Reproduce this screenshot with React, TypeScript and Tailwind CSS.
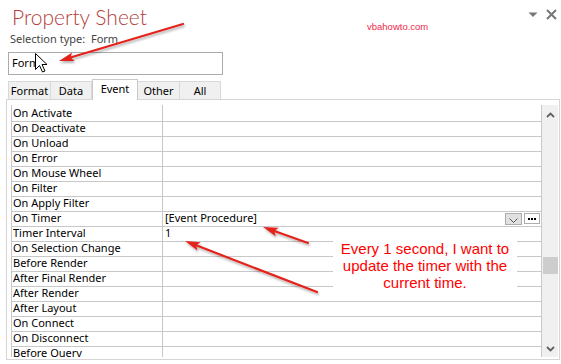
import React from "react";

const labels = [
  "On Activate",
  "On Deactivate",
  "On Unload",
  "On Error",
  "On Mouse Wheel",
  "On Filter",
  "On Apply Filter",
  "On Timer",
  "Timer Interval",
  "On Selection Change",
  "Before Render",
  "After Final Render",
  "After Render",
  "After Layout",
  "On Connect",
  "On Disconnect",
  "Before Query",
];

function Arrow({ x1, y1, x2, y2 }: { x1: number; y1: number; x2: number; y2: number }) {
  const dx = x2 - x1;
  const dy = y2 - y1;
  const L = Math.hypot(dx, dy);
  const ux = dx / L;
  const uy = dy / L;
  const hl = 15;
  const hw = 4.5;
  const bx = x2 - ux * hl;
  const by = y2 - uy * hl;
  const px = -uy;
  const py = ux;
  const nx = bx + ux * 3;
  const ny = by + uy * 3;
  const pts = `${x2},${y2} ${bx + px * hw},${by + py * hw} ${nx},${ny} ${bx - px * hw},${by - py * hw}`;
  return (
    <g>
      <line x1={x1} y1={y1} x2={nx} y2={ny} stroke="#e3241b" strokeWidth={2.2} strokeLinecap="round" />
      <polygon points={pts} fill="#e3241b" />
    </g>
  );
}

export default function App() {
  return (
    <div className="relative w-[561px] h-[364px] overflow-hidden bg-white font-['Noto_Sans',sans-serif] text-black">
      {/* header */}
      <div className="flex justify-between pt-[2px]">
        <div className="pl-[12px] font-['Lato',sans-serif] font-light text-[21px] leading-[30px] text-[#b4403b]">
          Property Sheet
        </div>
        <div className="flex items-start gap-[8px] pr-[4px] pt-[7px]">
          <svg width="10" height="12" viewBox="0 0 10 12">
            <polygon points="0.5,3.5 9.5,3.5 5,8" fill="#777" />
          </svg>
          <svg width="11" height="11" viewBox="0 0 11 11">
            <path d="M1 1 L10 10 M10 1 L1 10" stroke="#777" strokeWidth="2" />
          </svg>
        </div>
      </div>
      <div className="pl-[10px] text-[11px] leading-[14px] text-[#444]">Selection type:{"\u00a0"} Form</div>

      {/* input */}
      <div className="mt-[6px] ml-[8px] w-[215px] h-[23px] border border-[#ababab] flex items-center pl-[3px] text-[11px]">
        Form
      </div>

      {/* tabs */}
      <div className="mt-[4px] ml-[8px] flex items-end h-[20px] text-[11px] relative z-10">
        <div className="w-[43px] h-[18px] bg-[#f0f0f0] border border-b-0 border-[#d9d9d9] flex items-center justify-center leading-[14px]">Format</div>
        <div className="w-[41px] h-[18px] bg-[#f0f0f0] border border-b-0 border-l-0 border-[#d9d9d9] flex items-center justify-center leading-[14px]">Data</div>
        <div className="w-[46px] h-[21px] -mb-px bg-white border border-b-0 border-[#c9c9c9] flex items-start justify-center pt-[2px] leading-[14px]">Event</div>
        <div className="w-[42px] h-[18px] bg-[#f0f0f0] border border-b-0 border-l-0 border-[#d9d9d9] flex items-center justify-center leading-[14px]">Other</div>
        <div className="w-[41px] h-[18px] bg-[#f0f0f0] border border-b-0 border-l-0 border-[#d9d9d9] flex items-center justify-center leading-[14px]">All</div>
      </div>

      {/* panel */}
      <div className="ml-[6px] w-[554px] h-[261px] border border-[#d5d5d5] pt-[5px] pl-[4px] pr-[1px] pb-[2px]">
        <div className="flex h-[252px]">
          <div className="flex-1 border-l border-[#c8c8c8] overflow-hidden text-[11px]">
            <div className="h-[2px] w-[151px] border-r border-[#c8c8c8]" />
            {labels.map((l) => (
              <div key={l} className="flex h-[15px] border-b border-[#c8c8c8]">
                <div className="w-[151px] shrink-0 border-r border-[#c8c8c8] pl-[1px] leading-[12px] whitespace-nowrap">{l}</div>
                <div className="flex-1 flex pl-[2px] pr-[1px] leading-[12px]">
                  {l === "On Timer" && (
                    <>
                      <span>[Event Procedure]</span>
                      <div className="ml-auto flex items-start gap-[2px] pt-[1px]">
                        <div className="w-[17px] h-[12px] bg-[#e1e1e1] border border-[#adadad] flex items-end justify-center pb-[1px]">
                          <svg width="9" height="5" viewBox="0 0 9 5">
                            <path d="M0.5 0.5 L4.5 4.5 L8.5 0.5" stroke="#555" strokeWidth="1" fill="none" />
                          </svg>
                        </div>
                        <div className="w-[16px] h-[11px] bg-white border border-[#adadad] flex items-center justify-center gap-[1px]">
                          <span className="w-[2px] h-[2px] bg-black" />
                          <span className="w-[2px] h-[2px] bg-black" />
                          <span className="w-[2px] h-[2px] bg-black" />
                        </div>
                      </div>
                    </>
                  )}
                  {l === "Timer Interval" && <span>1</span>}
                </div>
              </div>
            ))}
          </div>
          <div className="w-[17px] border-l border-[#c8c8c8] bg-[#f0f0f0] flex flex-col items-center">
            <svg className="mt-[7px]" width="9" height="6" viewBox="0 0 9 6">
              <path d="M1 5 L4.5 1.5 L8 5" stroke="#606060" strokeWidth="1.8" fill="none" />
            </svg>
            <div className="mt-[139px] w-[15px] h-[17px] bg-[#cdcdcd]" />
            <svg className="mt-[72px]" width="9" height="6" viewBox="0 0 9 6">
              <path d="M1 1 L4.5 4.5 L8 1" stroke="#606060" strokeWidth="1.8" fill="none" />
            </svg>
          </div>
        </div>
      </div>

      {/* watermark */}
      <div className="absolute left-[367px] top-[21px] text-[9.5px] leading-[12px] font-['Liberation_Sans',sans-serif] text-[#f0284a]">
        vbahowto.com
      </div>

      {/* annotation */}
      <div className="absolute left-[333px] top-[229px] w-[184px] h-[60px] bg-white pt-[11px] text-center font-['Liberation_Sans',sans-serif] text-[15px] leading-[17px] text-[#ff0000]">
        Every 1 second, I want to
        <br />
        update the timer with the
        <br />
        current time.
      </div>

      {/* arrows and cursor */}
      <svg className="absolute left-0 top-0 pointer-events-none" width="561" height="364" viewBox="0 0 561 364">
        <defs>
          <filter id="sh" x="-20%" y="-20%" width="140%" height="140%">
            <feDropShadow dx="1" dy="2" stdDeviation="1" floodColor="#000" floodOpacity="0.3" />
          </filter>
        </defs>
        <g filter="url(#sh)">
          <Arrow x1={183} y1={24} x2={59} y2={61} />
          <Arrow x1={308} y1={243} x2={263} y2={227} />
          <Arrow x1={317} y1={292} x2={185} y2={241} />
        </g>
        <g transform="translate(35.5,53.5)">
          <path d="M0 0 L0 16 L4 12 L7 18.5 L9.5 17.5 L6.5 11 L11.5 11 Z" fill="#fff" stroke="#000" strokeWidth="1" strokeLinejoin="miter" />
        </g>
      </svg>
    </div>
  );
}
